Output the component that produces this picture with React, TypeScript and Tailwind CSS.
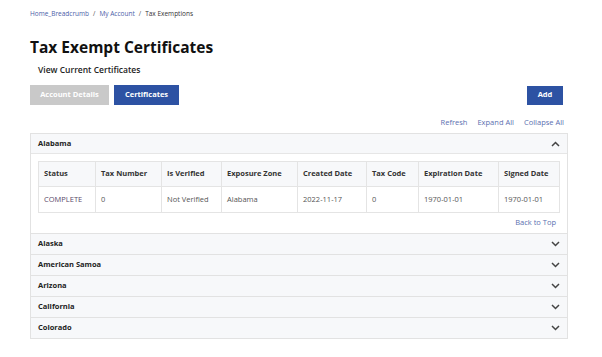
const columns = [
  { label: "Status", w: "w-[56px]" },
  { label: "Tax Number", w: "w-[66px]" },
  { label: "Is Verified", w: "w-[60px]" },
  { label: "Exposure Zone", w: "w-[76px]" },
  { label: "Created Date", w: "w-[69px]" },
  { label: "Tax Code", w: "w-[52px]" },
  { label: "Expiration Date", w: "w-[80px]" },
  { label: "Signed Date", w: "flex-1" },
];

const row = ["COMPLETE", "0", "Not Verified", "Alabama", "2022-11-17", "0", "1970-01-01", "1970-01-01"];

const states = ["Alaska", "American Samoa", "Arizona", "California", "Colorado"];

function Chevron({ up }: { up?: boolean }) {
  return (
    <svg width="9" height="6" viewBox="0 0 9 6" className="text-[#444]">
      <path
        d={up ? "M1 5 L4.5 1.5 L8 5" : "M1 1 L4.5 4.5 L8 1"}
        fill="none"
        stroke="currentColor"
        strokeWidth="1.5"
      />
    </svg>
  );
}

export default function App() {
  return (
    <div className="w-[602px] h-[357px] bg-white font-['Open_Sans',sans-serif] text-[#222] overflow-hidden">
      <div className="pl-[30px] pr-[34px] pt-[9px]">
        {/* breadcrumb */}
        <div className="flex items-center gap-[4px] text-[6.5px] leading-[10px]">
          <span className="text-[#4a5ea8]">Home_Breadcrumb</span>
          <span className="text-[#555]">/</span>
          <span className="text-[#4a5ea8]">My Account</span>
          <span className="text-[#555]">/</span>
          <span className="text-[#333]">Tax Exemptions</span>
        </div>

        <h1 className="mt-[18px] text-[15.5px] leading-[20px] font-bold text-[#111]">Tax Exempt Certificates</h1>
        <div className="mt-[7px] pl-[8px] text-[8.5px] leading-[12px] font-semibold text-[#222]">View Current Certificates</div>

        <div className="mt-[9px] flex items-center">
          <button className="w-[79px] h-[20px] bg-[#c9c9c9] text-white text-[7.5px] font-bold">Account Details</button>
          <button className="ml-[5px] w-[65px] h-[20px] bg-[#2d52a3] text-white text-[7.5px] font-bold">Certificates</button>
          <button className="ml-auto mr-[5px] w-[36px] h-[19px] bg-[#2d52a3] text-white text-[7.5px] font-bold">Add</button>
        </div>

        <div className="mt-[12px] flex justify-end gap-[10px] pr-[4px] text-[7.5px] leading-[10px] text-[#5b6fb0]">
          <span>Refresh</span>
          <span>Expand All</span>
          <span>Collapse All</span>
        </div>

        <div className="mt-[6px] border border-[#e2e2e2]">
          <div className="h-[20px] flex items-center justify-between px-[7px] bg-[#f7f8fa] border-b border-[#e6e6e6]">
            <span className="text-[7.5px] font-bold">Alabama</span>
            <Chevron up />
          </div>
          <div className="px-[7px] pt-[7px] pb-[6px]">
            <div className="border border-[#e4e4e4]">
              <div className="flex h-[25px] bg-[#f7f8fa] border-b border-[#e4e4e4]">
                {columns.map((c, i) => (
                  <div
                    key={c.label}
                    className={`${c.w} flex items-center px-[5px] text-[7.5px] font-bold text-[#333] ${i > 0 ? "border-l border-[#e4e4e4]" : ""}`}
                  >
                    {c.label}
                  </div>
                ))}
              </div>
              <div className="flex h-[25px]">
                {columns.map((c, i) => (
                  <div
                    key={c.label}
                    className={`${c.w} flex items-center px-[5px] text-[7.5px] ${i === 0 ? "text-[#5a4a6a]" : "text-[#555]"} ${i > 0 ? "border-l border-[#e4e4e4]" : ""}`}
                  >
                    {row[i]}
                  </div>
                ))}
              </div>
            </div>
            <div className="mt-[4px] pr-[4px] text-right text-[7.5px] leading-[10px] text-[#5b6fb0]">Back to Top</div>
          </div>
          {states.map((s) => (
            <div
              key={s}
              className="h-[21px] flex items-center justify-between px-[7px] bg-[#f7f8fa] border-t border-[#e2e2e2]"
            >
              <span className="text-[7.5px] font-bold">{s}</span>
              <Chevron />
            </div>
          ))}
        </div>
      </div>
    </div>
  );
}
